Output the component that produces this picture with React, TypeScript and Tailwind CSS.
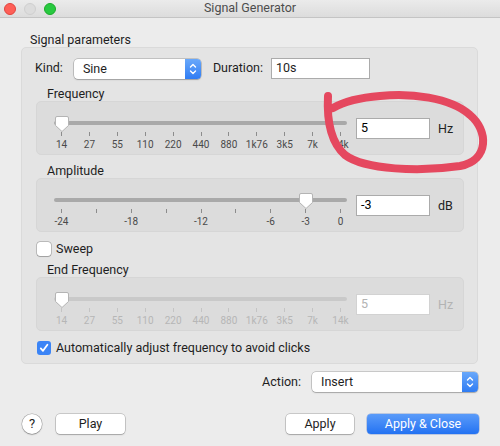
import React from 'react';

const FREQ_LABELS = ['14', '27', '55', '110', '220', '440', '880', '1k76', '3k5', '7k', '14k'];
const AMP_TICKS = ['-24', '', '-18', '', '-12', '', '-6', '-3', '0'];

// slider area spans 293px; first tick at 7px, last at 286px
const tickLeft = (i: number, n: number) => 7 + (279 * i) / (n - 1);

const Thumb = ({ left }: { left: number }) => (
    <svg
        width="16"
        height="18"
        viewBox="0 0 16 18"
        className="absolute top-[0px]"
        style={{ left: left - 8 }}
    >
        <path
            d="M3 1.5 H13 Q14.5 1.5 14.5 3 V10.5 L8 16.5 L1.5 10.5 V3 Q1.5 1.5 3 1.5 Z"
            fill="#ffffff"
            stroke="#b4b4b4"
            strokeWidth="1"
        />
    </svg>
);

const Slider = ({
    labels,
    value,
    disabled,
}: {
    labels: string[];
    value: number;
    disabled?: boolean;
}) => {
    const n = labels.length;
    return (
        <div className="relative ml-[17px] mt-[13px] h-[38px] w-[293px]">
            <div
                className={`absolute left-0 right-0 top-[6px] h-[4px] rounded-full ${
                    disabled ? 'bg-[#c9c9c9]' : 'bg-[#a9a9a9]'
                }`}
            />
            {labels.map((l, i) => (
                <div key={i}>
                    <div
                        className={`absolute top-[17px] h-[4px] w-px ${
                            disabled ? 'bg-[#c4c4c4]' : 'bg-[#8c8c8c]'
                        }`}
                        style={{ left: tickLeft(i, n) }}
                    />
                    {l && (
                        <div
                            className={`absolute top-[24px] w-[30px] -translate-x-1/2 text-center text-[10px] leading-[12px] ${
                                disabled ? 'text-[#b6b6b6]' : 'text-[#4a4a4a]'
                            }`}
                            style={{ left: tickLeft(i, n) + 0.5 }}
                        >
                            {l}
                        </div>
                    )}
                </div>
            ))}
            <Thumb left={tickLeft(value, n) + 0.5} />
        </div>
    );
};

const SliderBox = ({
    labels,
    value,
    text,
    unit,
    disabled,
}: {
    labels: string[];
    value: number;
    text: string;
    unit: string;
    disabled?: boolean;
}) => (
    <div className="ml-[14px] mr-[13px] flex h-[54px] rounded-[5px] border border-[#d6d6d6] bg-[#dcdcdc]">
        <Slider labels={labels} value={value} disabled={disabled} />
        <div
            className={`ml-[9px] mt-[16px] flex h-[21px] w-[74px] items-center border bg-white px-[4px] ${
                disabled ? 'border-[#d2d2d2] text-[#b3b3b3]' : 'border-[#ababab] text-black'
            }`}
        >
            {text}
        </div>
        <div className={`ml-[8px] mt-[18px] ${disabled ? 'text-[#b3b3b3]' : 'text-[#222]'}`}>{unit}</div>
    </div>
);

const Chevrons = () => (
    <div className="flex h-full w-[16px] items-center justify-center rounded-r-[4px] bg-gradient-to-b from-[#69a8fa] to-[#2f7cf3]">
        <svg width="10" height="14" viewBox="0 0 10 14" fill="none" stroke="#fff" strokeWidth="1.4" strokeLinecap="round" strokeLinejoin="round">
            <path d="M2.5 5 L5 2.5 L7.5 5" />
            <path d="M2.5 9 L5 11.5 L7.5 9" />
        </svg>
    </div>
);

const MacSelect = ({ value, className }: { value: string; className: string }) => (
    <div
        className={`flex h-[20px] rounded-[4px] bg-white shadow-[0_0_0_0.5px_rgba(0,0,0,0.3),0_1px_1.5px_rgba(0,0,0,0.18)] ${className}`}
    >
        <div className="flex-1 pl-[9px] leading-[20px]">{value}</div>
        <Chevrons />
    </div>
);

const Checkbox = ({ checked }: { checked?: boolean }) =>
    checked ? (
        <div className="flex h-[14px] w-[14px] items-center justify-center rounded-[3px] bg-[#3b84f6]">
            <svg width="10" height="10" viewBox="0 0 10 10" fill="none" stroke="#fff" strokeWidth="1.8" strokeLinecap="round" strokeLinejoin="round">
                <path d="M1.8 5.4 L4 7.8 L8.4 1.8" />
            </svg>
        </div>
    ) : (
        <div className="h-[14px] w-[14px] rounded-[3px] bg-white shadow-[0_0_0_0.5px_rgba(0,0,0,0.35),0_0.5px_1px_rgba(0,0,0,0.15)]" />
    );

const Button = ({ label, className }: { label: string; className: string }) => (
    <div
        className={`flex h-[20px] items-center justify-center rounded-[4px] bg-white shadow-[0_0_0_0.5px_rgba(0,0,0,0.3),0_1px_1.5px_rgba(0,0,0,0.18)] ${className}`}
    >
        {label}
    </div>
);

export default function App() {
    return (
        <div className="relative h-[446px] w-[500px] overflow-hidden bg-[#ececec] font-['Roboto',sans-serif] text-[12.5px] text-[#1e1e1e]">
            {/* title bar */}
            <div className="relative flex h-[18px] items-center border-b border-[#c4c4c4] bg-gradient-to-b from-[#ebebeb] to-[#dcdcdc]">
                <div className="ml-[4px] flex gap-[8px]">
                    <div className="h-[12px] w-[12px] rounded-full border border-[#e0443e] bg-[#fe5f57]" />
                    <div className="h-[12px] w-[12px] rounded-full border border-[#cfcfcf] bg-[#dcdcdc]" />
                    <div className="h-[12px] w-[12px] rounded-full border border-[#1aab29] bg-[#28c940]" />
                </div>
                <div className="absolute inset-x-0 text-center text-[12.5px] text-[#4d4d4d]">Signal Generator</div>
            </div>

            <div className="ml-[30px] mt-[14px] leading-[15px]">Signal parameters</div>

            <div className="mx-[21px] mr-[22px] flex flex-col rounded-[5px] border border-[#dadada] bg-[#e4e4e4] pb-[8px]">
                <div className="mt-[10px] flex h-[21px] items-center">
                    <div className="ml-[13px]">Kind:</div>
                    <MacSelect value="Sine" className="ml-[11px] w-[127px]" />
                    <div className="ml-[12px]">Duration:</div>
                    <div className="ml-[8px] flex h-[21px] w-[99px] items-center border border-[#ababab] bg-white px-[4px]">
                        10s
                    </div>
                </div>

                <div className="ml-[25px] mt-[8px] leading-[14px]">Frequency</div>
                <SliderBox labels={FREQ_LABELS} value={0} text="5" unit="Hz" />

                <div className="ml-[25px] mt-[9px] leading-[14px]">Amplitude</div>
                <SliderBox labels={AMP_TICKS} value={7} text="-3" unit="dB" />

                <div className="ml-[15px] mt-[10px] flex h-[14px] items-center gap-[5px]">
                    <Checkbox />
                    <div>Sweep</div>
                </div>

                <div className="ml-[25px] mt-[7px] leading-[14px]">End Frequency</div>
                <SliderBox labels={FREQ_LABELS} value={0} text="5" unit="Hz" disabled />

                <div className="ml-[15px] mt-[10px] flex h-[14px] items-center gap-[5px]">
                    <Checkbox checked />
                    <div>Automatically adjust frequency to avoid clicks</div>
                </div>
            </div>

            <div className="mt-[8px] flex h-[20px] items-center justify-end pr-[22px]">
                <div>Action:</div>
                <MacSelect value="Insert" className="ml-[11px] w-[166px]" />
            </div>

            <div className="mt-[22px] flex h-[20px] items-center">
                <div className="ml-[22px] flex h-[20px] w-[20px] items-center justify-center rounded-full bg-white text-[13px] shadow-[0_0_0_0.5px_rgba(0,0,0,0.3),0_1px_1.5px_rgba(0,0,0,0.2)]">
                    ?
                </div>
                <Button label="Play" className="ml-[14px] w-[69px]" />
                <div className="flex-1" />
                <Button label="Apply" className="w-[68px]" />
                <div className="ml-[13px] mr-[21px] flex h-[20px] w-[112px] items-center justify-center rounded-[4px] bg-gradient-to-b from-[#5a9bf9] to-[#2272f2] text-white shadow-[0_0_0_0.5px_rgba(0,60,180,0.4)]">
                    Apply &amp; Close
                </div>
            </div>

            {/* hand-drawn annotation */}
            <svg className="pointer-events-none absolute inset-0" width="500" height="446" viewBox="0 0 500 446">
                <path
                    d="M328 96 C327 115 328 140 345 155 C365 170 420 172 460 166 C490 160 488 130 470 115 C450 97 410 93 380 96 C355 98 340 104 333 108"
                    fill="none"
                    stroke="#e5485f"
                    strokeWidth="8"
                    strokeLinecap="round"
                    strokeLinejoin="round"
                />
            </svg>
        </div>
    );
}
